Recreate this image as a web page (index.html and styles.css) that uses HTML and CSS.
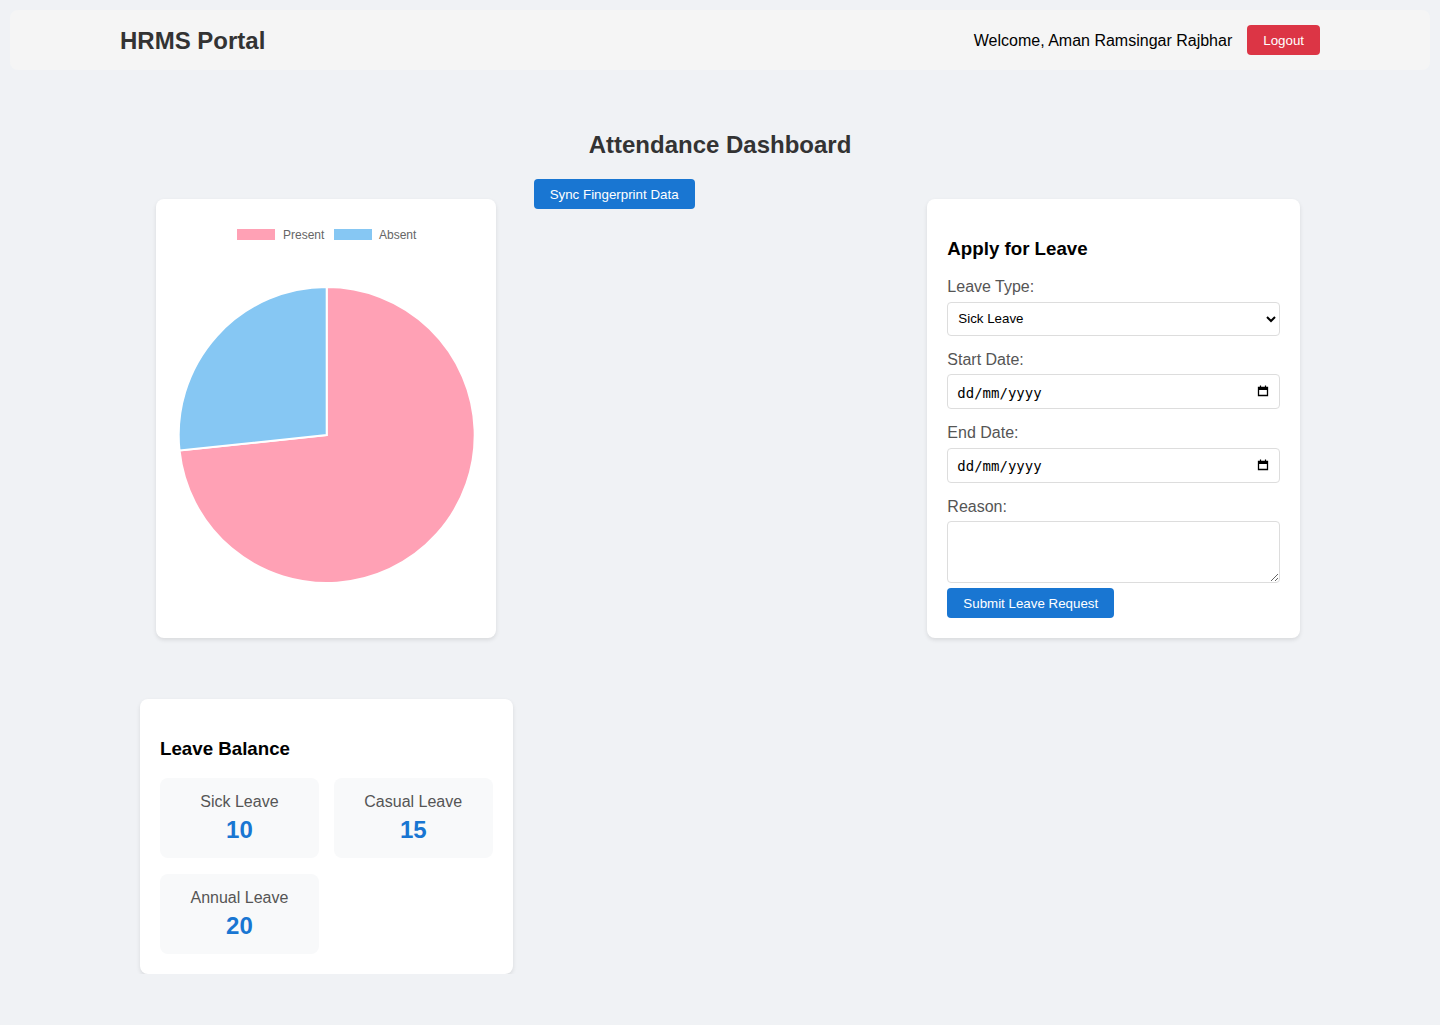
FILE: index.html
```html
<!DOCTYPE html>
<html lang="en">
<head>
<meta charset="utf-8">
<title>HRMS Portal</title>
<link rel="stylesheet" href="styles.css">
</head>
<body>
<header class="navbar">
  <div class="nav-inner">
    <h1 class="brand">HRMS Portal</h1>
    <div class="nav-user">
      <span class="welcome">Welcome, Aman Ramsingar Rajbhar</span>
      <button class="btn btn-danger">Logout</button>
    </div>
  </div>
</header>

<main class="container">
  <h2 class="page-title">Attendance Dashboard</h2>

  <div class="dashboard-grid">
    <div class="chart-col">
      <div class="card chart-card">
        <svg class="pie" width="300" height="399" viewBox="0 0 300 399">
          <rect x="61" y="10" width="38" height="11" fill="#ffa1b5"/>
          <text class="legend-text" x="107" y="20">Present</text>
          <rect x="158" y="10" width="38" height="11" fill="#86c7f3"/>
          <text class="legend-text" x="203" y="20">Absent</text>
          <path d="M150.7,216 L150.7,68 A148,148 0 1 1 3.51,231.47 Z" fill="#ffa1b5" stroke="#fff" stroke-width="2"/>
          <path d="M150.7,216 L3.51,231.47 A148,148 0 0 1 150.7,68 Z" fill="#86c7f3" stroke="#fff" stroke-width="2"/>
        </svg>
      </div>
    </div>

    <div class="sync-col">
      <button class="btn btn-primary">Sync Fingerprint Data</button>
    </div>

    <div class="card leave-card">
      <h3>Apply for Leave</h3>
      <form class="leave-form">
        <div class="form-group">
          <label for="ltype">Leave Type:</label>
          <select id="ltype" class="control">
            <option>Sick Leave</option>
            <option>Casual Leave</option>
            <option>Annual Leave</option>
          </select>
        </div>
        <div class="form-group">
          <label for="sdate">Start Date:</label>
          <input id="sdate" class="control date" type="text" placeholder="dd/mm/yyyy">
          <svg class="cal-icon" width="12" height="12" viewBox="0 0 12 12"><path d="M1.5 2.5h9v8h-9z" fill="none" stroke="#000" stroke-width="1.3"/><path d="M1.5 2h9v3h-9z" fill="#000"/><path d="M3.5 0.5v2M8.5 0.5v2" stroke="#000" stroke-width="1.2"/></svg>
        </div>
        <div class="form-group">
          <label for="edate">End Date:</label>
          <input id="edate" class="control date" type="text" placeholder="dd/mm/yyyy">
          <svg class="cal-icon" width="12" height="12" viewBox="0 0 12 12"><path d="M1.5 2.5h9v8h-9z" fill="none" stroke="#000" stroke-width="1.3"/><path d="M1.5 2h9v3h-9z" fill="#000"/><path d="M3.5 0.5v2M8.5 0.5v2" stroke="#000" stroke-width="1.2"/></svg>
        </div>
        <div class="form-group last">
          <label for="reason">Reason:</label>
          <textarea id="reason" class="control reason" rows="3"></textarea>
        </div>
        <button type="button" class="btn btn-primary submit">Submit Leave Request</button>
      </form>
    </div>

    <div class="card balance-card">
      <h3>Leave Balance</h3>
      <div class="balance-grid">
        <div class="balance-item"><div class="b-label">Sick Leave</div><div class="b-value">10</div></div>
        <div class="balance-item"><div class="b-label">Casual Leave</div><div class="b-value">15</div></div>
        <div class="balance-item"><div class="b-label">Annual Leave</div><div class="b-value">20</div></div>
      </div>
    </div>
  </div>
</main>
</body>
</html>
```

FILE: styles.css
```css
* { box-sizing: border-box; }

body {
  margin: 0;
  background: #f0f2f5;
  font-family: "Liberation Sans", Arial, sans-serif;
  color: #000;
}

.navbar {
  margin: 10px;
  height: 60px;
  background: #f5f5f5;
  border-radius: 8px;
}

.nav-inner {
  max-width: 1200px;
  height: 100%;
  margin: 0 auto;
  padding-top: 2px;
  display: flex;
  align-items: center;
  justify-content: space-between;
}

.brand {
  margin: 0;
  font-size: 24px;
  font-weight: bold;
  color: #333;
}

.nav-user {
  display: flex;
  align-items: center;
  gap: 15px;
}

.welcome {
  font-size: 16px;
  color: #000;
}

.btn {
  border: none;
  border-radius: 4px;
  color: #fff;
  font-family: "Liberation Sans", Arial, sans-serif;
  font-size: 13.33px;
  height: 30px;
  padding: 0 16px;
  cursor: pointer;
}

.btn-danger {
  background: #dc3545;
  margin-top: -2px;
}

.btn-primary { background: #1976d2; }

.container {
  max-width: 1200px;
  margin: 0 auto;
  padding: 0 20px;
}

.page-title {
  text-align: center;
  font-size: 24px;
  line-height: 28px;
  color: #333;
  margin: 61px 0 20px;
}

.dashboard-grid {
  display: grid;
  grid-template-columns: repeat(3, 1fr);
  column-gap: 21px;
  row-gap: 61px;
  align-items: start;
}

.card {
  background: #fff;
  border-radius: 8px;
  box-shadow: 0 2px 4px rgba(0, 0, 0, 0.1);
  padding: 20px;
}

.card h3 {
  font-size: 18.72px;
  margin: 18.72px 0;
  line-height: 22px;
}

.chart-card {
  width: 340px;
  height: 439px;
  margin: 20px auto 0;
}

.pie { display: block; }

.legend-text {
  font-family: "Liberation Sans", Arial, sans-serif;
  font-size: 12px;
  fill: #666;
}

.leave-card {
  margin-top: 20px;
  height: 439px;
}

.form-group {
  position: relative;
  margin-bottom: 15px;
}

.form-group.last { margin-bottom: 5px; }

.form-group label {
  display: block;
  font-size: 16px;
  line-height: 18px;
  color: #555;
  margin-bottom: 5.5px;
}

.control {
  display: block;
  width: 100%;
  border: 1px solid #ddd;
  border-radius: 4px;
  background: #fff;
  font-family: "Liberation Sans", Arial, sans-serif;
  font-size: 13.33px;
  color: #000;
}

select.control {
  height: 34px;
  padding: 0 8px 0 6px;
}

.control.date {
  height: 35px;
  padding: 2px 9px 0;
  font-family: "DejaVu Sans Mono", "Liberation Mono", monospace;
  font-size: 14px;
}

.control.date::placeholder { color: #000; }

.cal-icon {
  position: absolute;
  right: 11px;
  bottom: 12px;
}

.reason {
  height: 62px;
  padding: 8px;
  resize: vertical;
  font-family: "DejaVu Sans Mono", monospace;
}

.submit { display: block; }

.balance-card {
  grid-column: 1;
}

.balance-grid {
  display: grid;
  grid-template-columns: 1fr 1fr;
  gap: 16px 15px;
}

.balance-item {
  background: #f8f9fa;
  border-radius: 8px;
  padding: 15px 10px 14px;
  text-align: center;
  height: 80px;
}

.b-label {
  font-size: 16px;
  line-height: 18px;
  color: #555;
  margin-bottom: 5px;
}

.b-value {
  font-size: 24px;
  line-height: 28px;
  font-weight: bold;
  color: #1976d2;
}
```
